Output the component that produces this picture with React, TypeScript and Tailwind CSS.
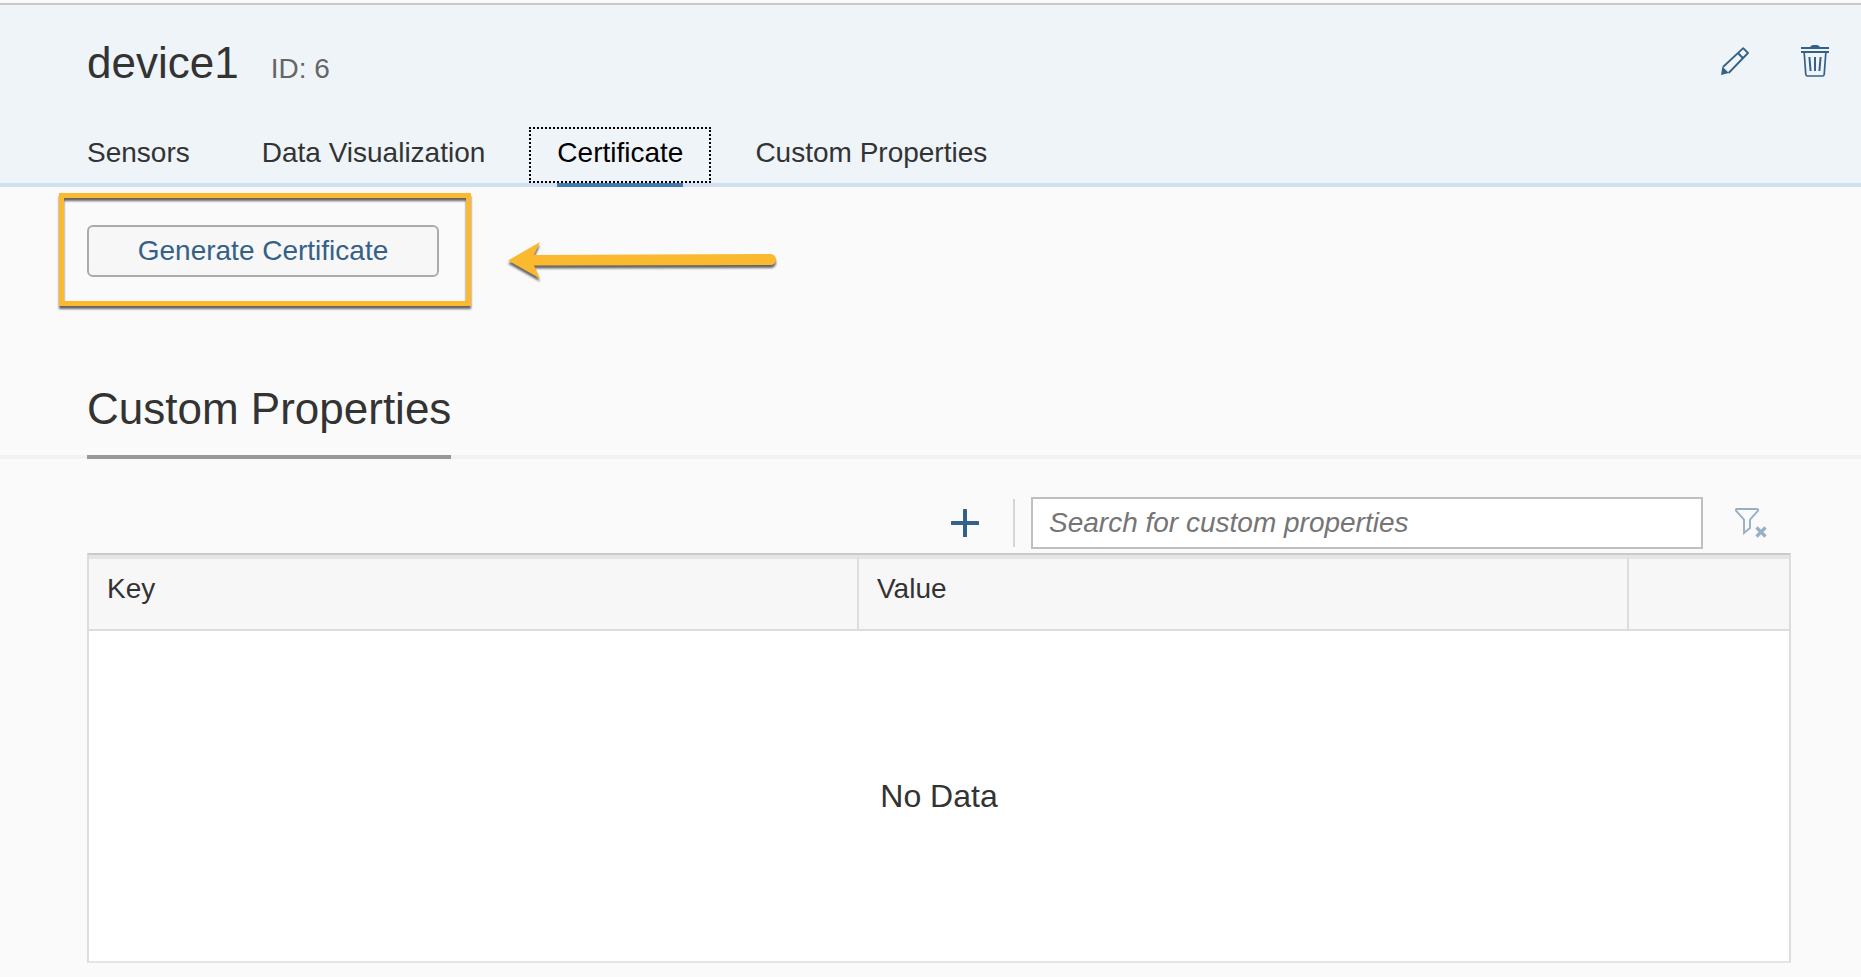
import { useState } from "react";

const tabs = ["Sensors", "Data Visualization", "Certificate", "Custom Properties"];

function PencilIcon() {
  return (
    <svg width="28" height="28" viewBox="0 0 28 28" fill="none" stroke="currentColor" strokeWidth="1.8" aria-hidden="true">
      <path d="M2 20 L22.2 1.2 L27 6 L7.6 26" strokeLinejoin="round" />
      <path d="M17.2 6.2 L21.8 11" strokeWidth="2" />
      <path d="M1.4 19.4 L7.8 26 L0 28 Z" fill="currentColor" stroke="none" />
    </svg>
  );
}

function TrashIcon() {
  return (
    <svg width="28" height="32" viewBox="0 0 28 32" fill="none" stroke="currentColor" strokeWidth="2" aria-hidden="true">
      <path d="M9 2.5 C9.5 0.8 11 0 12.5 0 H15.500 C17 0 18.500 0.8 19 2.500 Z" fill="currentColor" stroke="none" />
      <path d="M0 3 H28 M0 7 H28" />
      <path d="M3.200 8 L4.800 29.500 Q5 31 6.500 31 H21.500 Q23 31 23.200 29.500 L24.800 8" strokeWidth="1.7" />
      <path d="M14 12 V26 M8.400 12 L9.600 26 M19.600 12 L18.400 26" />
    </svg>
  );
}

function PlusIcon() {
  return (
    <svg width="28" height="28" viewBox="0 0 28 28" fill="currentColor" aria-hidden="true">
      <rect x="12" y="0" width="4" height="28" rx="0.6" />
      <rect x="0" y="12" width="28" height="4" rx="0.6" />
    </svg>
  );
}

function ClearFilterIcon() {
  return (
    <svg width="32" height="30" viewBox="0 0 32 30" fill="none" stroke="currentColor" aria-hidden="true">
      <path d="M2 1 H22 Q24 1.300 22.800 3 L15 11.500 V20 L9 25 V11.500 L1.200 3 Q0 1.300 2 1 Z" strokeWidth="1.9" />
      <path d="M21.500 19.500 L30.500 28.500 M30.500 19.500 L21.500 28.500" strokeWidth="3.200" />
    </svg>
  );
}

function ArrowAnnotation() {
  return (
    <svg
      className="pointer-events-none absolute top-[52px] left-[508px] drop-shadow-[0_3px_1px_rgba(0,0,0,0.6)]"
      width="270"
      height="42"
      viewBox="0 0 270 42"
      fill="#fab92e"
      aria-hidden="true"
    >
      <path d="M0 21.500 L32 3 L26 16 L262.500 15 A5.500 5.500 0 0 1 262.500 26 L26 26.500 L32 39.500 Z" />
    </svg>
  );
}

export default function App() {
  const [active, setActive] = useState("Certificate");
  const [query, setQuery] = useState("");

  return (
    <div className="min-h-screen bg-[#fafafa] pt-[3px] font-['Liberation_Sans',Arial,sans-serif] text-[28px] leading-8 text-[#333333]">
      <header className="border-t-2 border-b-4 border-t-[#cacaca] border-b-[#d1e0ee] bg-[#eff4f9]">
        <div className="flex items-start justify-between pt-8 pr-1.5 pl-[87px]">
          <div className="flex items-baseline gap-8">
            <h1 className="text-[44px] leading-[52px]">device1</h1>
            <span className="text-[#666666]">ID: 6</span>
          </div>
          <div className="flex text-[#346187]">
            <button type="button" aria-label="Edit" className="flex h-12 w-20 items-center justify-center">
              <PencilIcon />
            </button>
            <button type="button" aria-label="Delete" className="flex h-12 w-20 items-center justify-center">
              <TrashIcon />
            </button>
          </div>
        </div>
        <nav className="flex gap-4 pt-[38px] pl-[59px]" role="tablist" aria-label="Device sections">
          {tabs.map((tab) => {
            const selected = tab === active;
            return (
              <button
                key={tab}
                type="button"
                role="tab"
                aria-selected={selected}
                onClick={() => setActive(tab)}
                className={
                  selected
                    ? "relative h-14 border-2 border-dotted border-black px-[26px] pb-1 text-black"
                    : "relative h-14 border-2 border-transparent px-[26px] pb-1"
                }
              >
                {tab}
                {selected && <span className="absolute inset-x-[26px] -bottom-1.5 h-1 bg-[#427cac]" />}
              </button>
            );
          })}
        </nav>
      </header>

      <main>
        <section className="relative pt-[38px] pl-[87px]">
          <button
            type="button"
            className="flex h-[52px] w-[352px] items-center justify-center rounded-md border-2 border-[#ababab] bg-[#f7f7f7] text-[#346187]"
          >
            Generate Certificate
          </button>
          <div className="pointer-events-none absolute top-1.5 left-[59px] h-[113px] w-[412px] border-[5px] border-[#fab92e] drop-shadow-[0_3px_1px_rgba(0,0,0,0.6)]" />
          <ArrowAnnotation />
        </section>

        <section className="pt-[106px] pb-3.5">
          <div className="flex border-b-4 border-[#f2f2f2] pl-[87px]">
            <h2 className="-mb-1 border-b-4 border-[#979797] pb-5 text-[44px] leading-[52px]">Custom Properties</h2>
          </div>

          <div className="pt-[38px] pr-[70px] pl-[87px]">
            <div className="mb-1 flex items-center justify-end">
              <button type="button" aria-label="Add custom property" className="flex h-12 w-20 items-center justify-center text-[#346187]">
                <PlusIcon />
              </button>
              <span className="mr-4 ml-2 h-12 w-0.5 bg-[#d3d7d9]" />
              <input
                type="text"
                aria-label="Search for custom properties"
                placeholder="Search for custom properties"
                value={query}
                onChange={(event) => setQuery(event.target.value)}
                className="mr-2 h-[52px] w-[672px] min-w-0 border-2 border-[#bfbfbf] bg-white px-4 placeholder:text-[#757575] placeholder:italic"
              />
              <button type="button" aria-label="Clear filter" className="flex h-12 w-20 items-center justify-center text-[#98b0c4]">
                <ClearFilterIcon />
              </button>
            </div>

            <div className="border-2 border-t-[#cacaca] border-r-[#dddddd] border-b-[#e5e5e5] border-l-[#dddddd] bg-white">
              <table className="w-full table-fixed border-separate border-spacing-0">
                <colgroup>
                  <col />
                  <col />
                  <col className="w-40" />
                </colgroup>
                <thead>
                  <tr className="h-[76px] bg-[#f7f7f7] text-left">
                    <th className="border-t-4 border-r-2 border-b-2 border-[#dddddd] border-t-[#e5e5e5] px-[18px] pb-2.5 font-normal">Key</th>
                    <th className="border-t-4 border-r-2 border-b-2 border-[#dddddd] border-t-[#e5e5e5] px-[18px] pb-2.5 font-normal">Value</th>
                    <th className="border-t-4 border-b-2 border-[#dddddd] border-t-[#e5e5e5]" aria-label="Actions" />
                  </tr>
                </thead>
                <tbody>
                  <tr className="h-[330px]">
                    <td colSpan={3} className="text-center text-[32px]">No Data</td>
                  </tr>
                </tbody>
              </table>
            </div>
          </div>
        </section>
      </main>
    </div>
  );
}
